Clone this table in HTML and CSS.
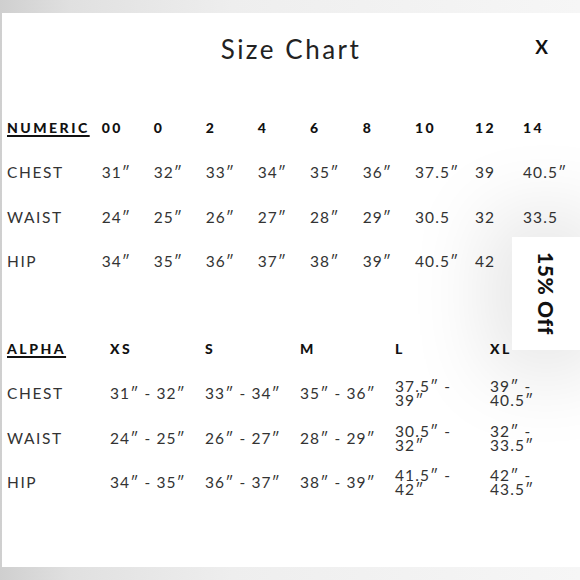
FILE: index.html
```html
<!DOCTYPE html>
<html lang="en">
<head>
<meta charset="utf-8">
<title>Size Chart</title>
<link rel="stylesheet" href="styles.css">
</head>
<body>
<div class="frame">
  <div class="panel">
    <header class="title-bar">
      <h1 class="title">Size Chart</h1>
      <button class="close" type="button">X</button>
    </header>

    <div class="chart numeric">
      <div class="hd"><span class="group">NUMERIC</span></div>
      <div class="hd">00</div><div class="hd">0</div><div class="hd">2</div><div class="hd">4</div><div class="hd">6</div><div class="hd">8</div><div class="hd">10</div><div class="hd">12</div><div class="hd">14</div>

      <div class="lbl">CHEST</div>
      <div class="val">31″</div><div class="val">32″</div><div class="val">33″</div><div class="val">34″</div><div class="val">35″</div><div class="val">36″</div><div class="val">37.5″</div><div class="val">39</div><div class="val">40.5″</div>

      <div class="lbl">WAIST</div>
      <div class="val">24″</div><div class="val">25″</div><div class="val">26″</div><div class="val">27″</div><div class="val">28″</div><div class="val">29″</div><div class="val">30.5</div><div class="val">32</div><div class="val">33.5</div>

      <div class="lbl">HIP</div>
      <div class="val">34″</div><div class="val">35″</div><div class="val">36″</div><div class="val">37″</div><div class="val">38″</div><div class="val">39″</div><div class="val">40.5″</div><div class="val">42</div><div class="val"></div>
    </div>

    <div class="chart alpha">
      <div class="hd"><span class="group">ALPHA</span></div>
      <div class="hd">XS</div><div class="hd">S</div><div class="hd">M</div><div class="hd">L</div><div class="hd">XL</div>

      <div class="lbl">CHEST</div>
      <div class="val">31″ - 32″</div><div class="val">33″ - 34″</div><div class="val">35″ - 36″</div><div class="val">37.5″ - 39″</div><div class="val">39″ - 40.5″</div>

      <div class="lbl">WAIST</div>
      <div class="val">24″ - 25″</div><div class="val">26″ - 27″</div><div class="val">28″ - 29″</div><div class="val">30.5″ - 32″</div><div class="val">32″ - 33.5″</div>

      <div class="lbl">HIP</div>
      <div class="val">34″ - 35″</div><div class="val">36″ - 37″</div><div class="val">38″ - 39″</div><div class="val">41.5″ - 42″</div><div class="val">42″ - 43.5″</div>
    </div>
  </div>

  <aside class="promo">15% Off</aside>
</div>
</body>
</html>
```

FILE: styles.css
```css
* { box-sizing: border-box; }

body {
  margin: 0;
  background: #fff;
}

.frame {
  position: relative;
  width: 580px;
  height: 580px;
  overflow: hidden;
  padding: 13px 0 0 2px;
  background: linear-gradient(to right, #cfcfcf 0, #e0e0e0 12%, #eeeeee 40%, #f6f6f6 100%);
  font-family: Lato, "Noto Sans", sans-serif;
}

.panel {
  height: 554px;
  background: #fff;
}

.title-bar {
  display: grid;
  grid-template-columns: 1fr auto 1fr;
  align-items: center;
  padding-top: 21px;
  height: 51px;
}

.title {
  grid-column: 2;
  margin: 0;
  font-size: 26px;
  line-height: 30px;
  font-weight: 400;
  letter-spacing: 2.5px;
  color: #222;
}

.close {
  grid-column: 3;
  justify-self: end;
  margin-right: 32px;
  margin-top: -4px;
  padding: 0;
  border: 0;
  background: none;
  font-family: Lato, "Noto Sans", sans-serif;
  font-size: 19px;
  font-weight: 700;
  line-height: 30px;
  color: #111;
}

.chart {
  display: grid;
  grid-auto-rows: 44.5px;
  align-items: center;
  padding-left: 5px;
}

.numeric {
  grid-template-columns: 94.7px 52px 52px 52px 52.3px 52.7px 52.3px 60px 48px auto;
  margin-top: 41.5px;
}

.alpha {
  grid-template-columns: 103px 95px 95px 95px 95px auto;
  margin-top: 43px;
}

.hd {
  font-size: 14px;
  font-weight: 900;
  letter-spacing: 2.5px;
  color: #111;
  white-space: nowrap;
}

.group {
  text-decoration: underline;
  text-decoration-thickness: 2px;
  text-underline-offset: 2px;
}

.lbl,
.val {
  font-size: 15.5px;
  letter-spacing: 1.1px;
  color: #333;
  white-space: nowrap;
}

.lbl {
  letter-spacing: 1.6px;
}

.alpha .val {
  white-space: normal;
  max-width: 81px;
  line-height: 14px;
}

.promo {
  position: absolute;
  left: 512px;
  top: 237px;
  width: 68px;
  height: 113px;
  display: flex;
  align-items: center;
  justify-content: center;
  background: #fff;
  box-shadow: 0 0 80px 25px rgba(0, 0, 0, 0.1);
  writing-mode: vertical-rl;
  font-size: 21px;
  font-weight: 900;
  letter-spacing: 0.6px;
  color: #111;
}
```
